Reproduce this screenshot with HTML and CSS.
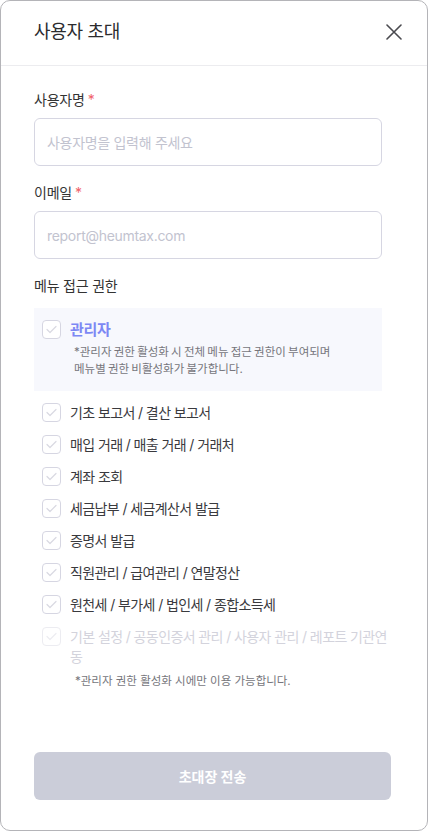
FILE: index.html
```html
<!DOCTYPE html>
<html lang="ko">
<head>
<meta charset="utf-8">
<title>사용자 초대</title>
<link rel="stylesheet" href="styles.css">
</head>
<body>
<div class="modal">
  <header class="modal-header">
    <h1 class="modal-title">사용자 초대</h1>
    <button class="close-btn" aria-label="닫기">
      <svg width="16" height="16" viewBox="0 0 16 16"><path d="M1 1L15 15M15 1L1 15" stroke="#4a4a4f" stroke-width="1.6" stroke-linecap="round" fill="none"/></svg>
    </button>
  </header>
  <div class="modal-body">
    <div class="field">
      <label class="field-label">사용자명<span class="req">*</span></label>
      <div class="input"><span class="placeholder">사용자명을 입력해 주세요</span></div>
    </div>
    <div class="field">
      <label class="field-label">이메일<span class="req">*</span></label>
      <div class="input"><span class="placeholder latin">report@heumtax.com</span></div>
    </div>
    <div class="field">
      <label class="field-label">메뉴 접근 권한</label>
      <div class="admin-box">
        <div class="check-row">
          <span class="checkbox"><svg width="11" height="9" viewBox="0 0 11 9"><path d="M1 4.5L4 7.5L10 1.5" stroke="#d9d9e2" stroke-width="1.2" fill="none" stroke-linecap="round" stroke-linejoin="round"/></svg></span>
          <span class="admin-label">관리자</span>
        </div>
        <p class="note">*관리자 권한 활성화 시 전체 메뉴 접근 권한이 부여되며<br>메뉴별 권한 비활성화가 불가합니다.</p>
      </div>
      <ul class="check-list">
        <li class="check-row"><span class="checkbox"><svg width="11" height="9" viewBox="0 0 11 9"><path d="M1 4.5L4 7.5L10 1.5" stroke="#d9d9e2" stroke-width="1.2" fill="none" stroke-linecap="round" stroke-linejoin="round"/></svg></span><span class="check-text">기초 보고서 / 결산 보고서</span></li>
        <li class="check-row"><span class="checkbox"><svg width="11" height="9" viewBox="0 0 11 9"><path d="M1 4.5L4 7.5L10 1.5" stroke="#d9d9e2" stroke-width="1.2" fill="none" stroke-linecap="round" stroke-linejoin="round"/></svg></span><span class="check-text">매입 거래 / 매출 거래 / 거래처</span></li>
        <li class="check-row"><span class="checkbox"><svg width="11" height="9" viewBox="0 0 11 9"><path d="M1 4.5L4 7.5L10 1.5" stroke="#d9d9e2" stroke-width="1.2" fill="none" stroke-linecap="round" stroke-linejoin="round"/></svg></span><span class="check-text">계좌 조회</span></li>
        <li class="check-row"><span class="checkbox"><svg width="11" height="9" viewBox="0 0 11 9"><path d="M1 4.5L4 7.5L10 1.5" stroke="#d9d9e2" stroke-width="1.2" fill="none" stroke-linecap="round" stroke-linejoin="round"/></svg></span><span class="check-text">세금납부 / 세금계산서 발급</span></li>
        <li class="check-row"><span class="checkbox"><svg width="11" height="9" viewBox="0 0 11 9"><path d="M1 4.5L4 7.5L10 1.5" stroke="#d9d9e2" stroke-width="1.2" fill="none" stroke-linecap="round" stroke-linejoin="round"/></svg></span><span class="check-text">증명서 발급</span></li>
        <li class="check-row"><span class="checkbox"><svg width="11" height="9" viewBox="0 0 11 9"><path d="M1 4.5L4 7.5L10 1.5" stroke="#d9d9e2" stroke-width="1.2" fill="none" stroke-linecap="round" stroke-linejoin="round"/></svg></span><span class="check-text">직원관리 / 급여관리 / 연말정산</span></li>
        <li class="check-row"><span class="checkbox"><svg width="11" height="9" viewBox="0 0 11 9"><path d="M1 4.5L4 7.5L10 1.5" stroke="#d9d9e2" stroke-width="1.2" fill="none" stroke-linecap="round" stroke-linejoin="round"/></svg></span><span class="check-text">원천세 / 부가세 / 법인세 / 종합소득세</span></li>
        <li class="check-row disabled"><span class="checkbox"><svg width="11" height="9" viewBox="0 0 11 9"><path d="M1 4.5L4 7.5L10 1.5" stroke="#ececf1" stroke-width="1.2" fill="none" stroke-linecap="round" stroke-linejoin="round"/></svg></span><span class="check-text">기본 설정 / 공동인증서 관리 / 사용자 관리 / 레포트 기관연동</span></li>
      </ul>
      <p class="note note-bottom">*관리자 권한 활성화 시에만 이용 가능합니다.</p>
    </div>
  </div>
  <footer class="modal-footer">
    <button class="submit-btn">초대장 전송</button>
  </footer>
</div>
</body>
</html>
```

FILE: styles.css
```css
* { box-sizing: border-box; }
html, body { margin: 0; padding: 0; background: #fff; }
body {
  font-family: "Inter", "Noto Sans CJK KR", sans-serif;
  color: #333;
}
.modal {
  width: 428px;
  height: 831px;
  border: 1px solid #b4b4b8;
  border-radius: 10px;
  display: flex;
  flex-direction: column;
  overflow: hidden;
  background: #fff;
}
.modal-header {
  height: 65px;
  flex: none;
  border-bottom: 1px solid #ececef;
  display: flex;
  align-items: center;
  justify-content: space-between;
  padding: 0 25px 2px 33px;
}
.modal-title {
  margin: 0;
  font-size: 18px;
  font-weight: 400;
  line-height: 26px;
  color: #2b2b2e;
  letter-spacing: -0.3px;
}
.close-btn {
  border: 0;
  background: none;
  padding: 0;
  width: 16px;
  height: 16px;
  display: flex;
}
.modal-body {
  flex: 1;
  padding: 24px 45px 0 33px;
  display: flex;
  flex-direction: column;
  gap: 17px;
}
.field { display: flex; flex-direction: column; }
.field-label {
  font-size: 14px;
  line-height: 20px;
  color: #333;
  margin-bottom: 8px;
  letter-spacing: -0.2px;
}
.req { color: #f0616a; margin-left: 3px; }
.input {
  height: 48px;
  border: 1px solid #d6d6e2;
  border-radius: 6px;
  display: flex;
  align-items: center;
  padding: 0 12px;
}
.placeholder { font-size: 14px; color: #c2c3cf; letter-spacing: -0.3px; }
.admin-box {
  background: #f7f8fd;
  padding: 12px 8px 13px 8px;
  margin-top: 4px;
}
.check-row {
  display: flex;
  align-items: flex-start;
  gap: 9px;
}
.checkbox {
  flex: none;
  width: 19px;
  height: 19px;
  border: 1px solid #d6d6e2;
  border-radius: 4px;
  background: #fff;
  display: flex;
  align-items: center;
  justify-content: center;
}
.admin-label {
  font-size: 15px;
  font-weight: 700;
  line-height: 19px;
  color: #7d88f4;
  letter-spacing: -0.3px;
}
.note {
  margin: 5px 0 0 32px;
  font-size: 11.5px;
  line-height: 17px;
  color: #76767c;
  word-spacing: -1px;
}
.check-list {
  list-style: none;
  margin: 12px -12px 0 0;
  padding: 0 0 0 8px;
  display: flex;
  flex-direction: column;
  gap: 12px;
}
.check-text {
  font-size: 14px;
  line-height: 20px;
  color: #3a3a3e;
  letter-spacing: -0.6px;
  word-break: break-all;
}
.check-row.disabled .checkbox { border-color: #ececf1; }
.check-row.disabled .check-text { color: #d3d3dc; }
.note-bottom { margin: 6px 0 0 41px; word-spacing: 0; }
.modal-footer {
  flex: none;
  padding: 0 36px 30px 33px;
}
.submit-btn {
  width: 100%;
  height: 48px;
  border: 0;
  border-radius: 6px;
  background: #cbcdd9;
  color: #fff;
  font-family: "Inter", "Noto Sans CJK KR", sans-serif;
  font-size: 14px;
  font-weight: 700;
}
```
